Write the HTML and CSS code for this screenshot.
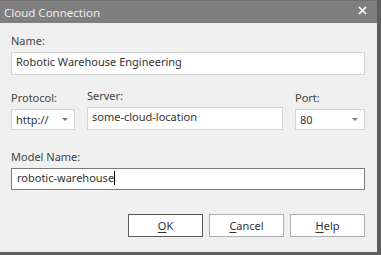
FILE: index.html
```html
<!doctype html>
<html lang="en">
  <head>
    <meta charset="utf-8">
    <meta name="viewport" content="width=device-width, initial-scale=1">
    <title>Cloud Connection</title>
    <link rel="stylesheet" href="styles.css">
  </head>
<body>
  <div class="window">
    <div class="titlebar">
      <span class="title">Cloud Connection</span>
      <svg class="close" width="9" height="9" viewBox="0 0 9 9">
        <path d="M1 1 L8 8 M8 1 L1 8" stroke="#fff" stroke-width="1.6"/>
      </svg>
    </div>
    <div class="content">
      <div class="label">Name:</div>
      <div class="field">Robotic Warehouse Engineering</div>

      <div class="row">
        <div class="col">
          <div class="label">Protocol:</div>
          <div class="select"><span>http://</span><i class="arrow"></i></div>
        </div>
        <div class="col">
          <div class="label">Server:</div>
          <div class="field">some-cloud-location</div>
        </div>
        <div class="col">
          <div class="label">Port:</div>
          <div class="select"><span>80</span><i class="arrow"></i></div>
        </div>
      </div>

      <div class="label model">Model Name:</div>
      <div class="field focus">robotic-warehouse<span class="caret"></span></div>

      <div class="buttons">
        <button class="default"><u>O</u>K</button>
        <button><u>C</u>ancel</button>
        <button><u>H</u>elp</button>
      </div>
    </div>
  </div>
</body>
</html>
```

FILE: styles.css
```css
html, body {
    margin: 0;
    height: 100%;
    background: #f0f0f0;
}

body {
    font-family: "Noto Sans", sans-serif;
    font-size: 11px;
    color: #3c3c3c;
}

.window {
    height: 255px;
    box-sizing: border-box;
    border-right: 4px solid #5e5e5e;
    border-bottom: 3px solid #5e5e5e;
    display: flex;
    flex-direction: column;
}

.titlebar {
    height: 22px;
    border-top: 1px solid #6e6e6e;
    background: #7f7f7f;
    display: flex;
    align-items: center;
    justify-content: space-between;
    padding: 0 10px 0 4px;
    color: #ededed;
}

.title {
    font-size: 11.5px;
    line-height: 16px;
    padding-top: 2px;
}

.close {
    margin-top: -4px;
}

.content {
    padding: 10px 12px 0 11px;
    display: flex;
    flex-direction: column;
}

.label {
    line-height: 15px;
    height: 15px;
    margin-bottom: 4px;
    color: #444;
}

.field {
    height: 23px;
    box-sizing: border-box;
    border: 1px solid #d5d5d5;
    background: #fff;
    padding: 0 4px;
    line-height: 18px;
    color: #333;
}

.field.focus {
    height: 22px;
    border-color: #7a7a7a;
    padding-left: 5px;
}

.caret {
    display: inline-block;
    width: 1px;
    height: 14px;
    background: #000;
    vertical-align: -3px;
}

.row {
    display: grid;
    grid-template-columns: 64px 196px 70px;
    column-gap: 12px;
    margin-top: 13px;
    align-items: end;
}

.select {
    height: 21px;
    box-sizing: border-box;
    border: 1px solid #d5d5d5;
    background: #fff;
    display: flex;
    align-items: center;
    justify-content: space-between;
    padding: 0 6px 0 4px;
    color: #333;
}

.arrow {
    width: 0;
    height: 0;
    border-left: 3px solid transparent;
    border-right: 3px solid transparent;
    border-top: 3px solid #777;
}

.label.model {
    margin-top: 19px;
}

.buttons {
    display: flex;
    justify-content: flex-end;
    gap: 6px;
    margin-top: 24px;
}

button {
    width: 75px;
    height: 23px;
    box-sizing: border-box;
    border: 1px solid #adadad;
    background: #fff;
    font-family: "Noto Sans", sans-serif;
    font-size: 11px;
    color: #333;
    padding: 0;
}

button.default {
    border-color: #5a5a5a;
}

u {
    text-decoration-thickness: 1px;
    text-underline-offset: 2px;
}
```
